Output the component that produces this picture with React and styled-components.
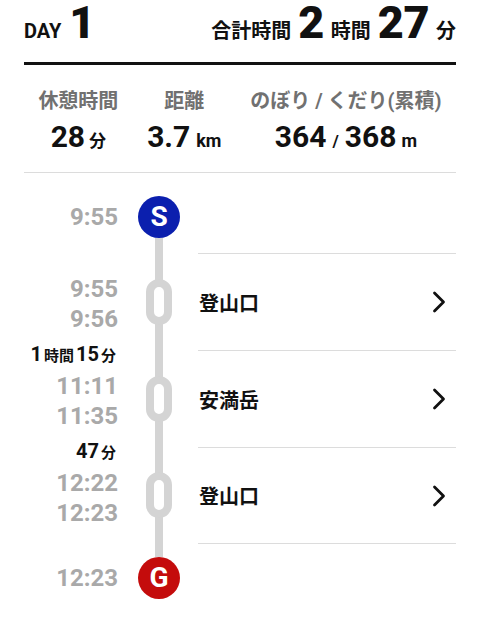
import React from 'react';
import styled, { createGlobalStyle } from 'styled-components';

const GlobalStyle = createGlobalStyle`
  html, body { margin: 0; padding: 0; background: #fff; }
  body {
    font-family: Roboto, "Noto Sans CJK JP", sans-serif;
    color: #111;
    -webkit-font-smoothing: antialiased;
  }
`;

const Page = styled.div`
  width: 480px;
  height: 623px;
  overflow: hidden;
  padding: 0 24px;
  box-sizing: border-box;
`;

const Header = styled.header`
  display: flex;
  justify-content: space-between;
  align-items: baseline;
  padding: 0 0 16px;
  border-bottom: 3px solid #111;
  line-height: 46px;
`;

const Group = styled.div`
  display: flex;
  align-items: baseline;
  gap: ${p => p.$gap || 7}px;
`;

const HeadSmall = styled.span`
  font-size: 20px;
  line-height: 1;
  font-weight: 700;
`;

const HeadBig = styled.span`
  font-size: 45px;
  font-weight: 900;
  letter-spacing: -0.5px;
`;

const Stats = styled.section`
  display: flex;
  justify-content: space-around;
  padding: 22px 0 17px;
  border-bottom: 1px solid #dcdcdc;
`;

const Stat = styled.div`
  display: flex;
  flex-direction: column;
  align-items: center;
  gap: 4px;
`;

const StatLabel = styled.div`
  font-size: 20px;
  line-height: 28px;
  font-weight: 700;
  color: #717171;
  white-space: nowrap;
`;

const StatValue = styled.div`
  font-size: 30px;
  line-height: 36px;
  height: 36px;
  font-weight: 700;
  white-space: nowrap;
`;

const Unit = styled.span`
  font-size: ${p => p.$size || 17}px;
  line-height: 1;
  margin: 0 ${p => p.$mr || 0}px 0 ${p => p.$ml || 4}px;
`;

const Timeline = styled.div`
  display: flex;
  flex-direction: column;
`;

const Row = styled.div`
  display: flex;
  height: ${p => p.$h}px;
`;

const TimeCell = styled.div`
  position: relative;
  width: 94px;
  margin-right: 20px;
  box-sizing: border-box;
  padding-top: ${p => p.$pt || 0}px;
  display: flex;
  flex-direction: column;
  align-items: flex-end;
  justify-content: ${p => (p.$center ? 'center' : 'flex-start')};
`;

const Time = styled.div`
  font-size: 24px;
  font-weight: 700;
  color: #a9a9a9;
  line-height: ${p => p.$lh || 30}px;
`;

const Duration = styled.div`
  position: absolute;
  right: 0;
  top: -11px;
  line-height: 30px;
  font-size: 20px;
  font-weight: 700;
  color: #111;
  white-space: nowrap;
`;

const DurUnit = styled.span`
  font-size: 15px;
  margin: 0 2px;
`;

const Rail = styled.div`
  width: 42px;
  display: flex;
  flex-direction: column;
  align-items: center;
  justify-content: center;
  box-sizing: border-box;
  background: linear-gradient(#d4d4d4, #d4d4d4) center / 8px 100% no-repeat;
`;

const EndRail = styled.div`
  width: 42px;
  display: flex;
  flex-direction: column;
  align-items: center;
  padding-top: ${p => p.$pt || 0}px;
  box-sizing: border-box;
`;

const Stem = styled.div`
  width: 8px;
  background: #d4d4d4;
  flex: ${p => (p.$h ? `0 0 ${p.$h}px` : '1')};
`;

const Terminal = styled.div`
  width: 42px;
  height: 42px;
  flex: 0 0 42px;
  border-radius: 50%;
  background: ${p => p.$color};
  color: #fff;
  font-size: 28px;
  font-weight: 700;
  display: flex;
  align-items: center;
  justify-content: center;
  line-height: 1;
`;

const Node = styled.div`
  width: 26px;
  height: 46px;
  box-sizing: border-box;
  border: 8px solid #d4d4d4;
  border-radius: 13px;
  background: #fff;
`;

const Content = styled.div`
  flex: 1;
  margin-left: 18px;
  border-top: 1px solid #dcdcdc;
  display: flex;
  align-items: center;
  justify-content: space-between;
  padding-right: 10px;
`;

const Place = styled.div`
  font-size: 20px;
  font-weight: 700;
  color: #111;
  padding-left: 1px;
`;

const Chevron = () => (
  <svg width="14" height="22" viewBox="0 0 14 22" fill="none">
    <polyline points="2.5,2 11.5,11 2.5,20" stroke="#111" strokeWidth="2.8" strokeLinecap="round" strokeLinejoin="round" />
  </svg>
);

const stops = [
  { name: '登山口', arr: '9:55', dep: '9:56', h: 97 },
  { name: '安満岳', arr: '11:11', dep: '11:35', h: 97, dur: [['1', '時間'], ['15', '分']] },
  { name: '登山口', arr: '12:22', dep: '12:23', h: 96, dur: [['47', '分']] },
];

export default function App() {
  return (
    <>
      <GlobalStyle />
      <Page>
        <Header>
          <Group $gap={8}>
            <HeadSmall>DAY</HeadSmall>
            <HeadBig>1</HeadBig>
          </Group>
          <Group $gap={7}>
            <HeadSmall>合計時間</HeadSmall>
            <HeadBig>2</HeadBig>
            <HeadSmall>時間</HeadSmall>
            <HeadBig>27</HeadBig>
            <HeadSmall>分</HeadSmall>
          </Group>
        </Header>

        <Stats>
          <Stat>
            <StatLabel>休憩時間</StatLabel>
            <StatValue>28<Unit $size={17}>分</Unit></StatValue>
          </Stat>
          <Stat>
            <StatLabel>距離</StatLabel>
            <StatValue>3.7<Unit $size={18} $ml={6}>km</Unit></StatValue>
          </Stat>
          <Stat>
            <StatLabel>のぼり / くだり(累積)</StatLabel>
            <StatValue>
              364<Unit $size={17} $ml={6} $mr={6}>/</Unit>368<Unit $size={18} $ml={5}>m</Unit>
            </StatValue>
          </Stat>
        </Stats>

        <Timeline>
          <Row $h={80}>
            <TimeCell $pt={23}>
              <Time $lh={42}>9:55</Time>
            </TimeCell>
            <EndRail $pt={23}>
              <Terminal $color="#0b1fae">S</Terminal>
              <Stem />
            </EndRail>
          </Row>

          {stops.map((s, i) => (
            <Row key={i} $h={s.h}>
              <TimeCell $center $pt={5}>
                {s.dur && (
                  <Duration>
                    {s.dur.map(([n, u]) => (
                      <React.Fragment key={u}>
                        {n}<DurUnit>{u}</DurUnit>
                      </React.Fragment>
                    ))}
                  </Duration>
                )}
                <Time>{s.arr}</Time>
                <Time>{s.dep}</Time>
              </TimeCell>
              <Rail>
                <Node />
              </Rail>
              <Content>
                <Place>{s.name}</Place>
                <Chevron />
              </Content>
            </Row>
          ))}

          <Row $h={80}>
            <TimeCell $pt={14}>
              <Time $lh={42}>12:23</Time>
            </TimeCell>
            <EndRail>
              <Stem $h={14} />
              <Terminal $color="#c40c0c">G</Terminal>
            </EndRail>
            <Content />
          </Row>
        </Timeline>
      </Page>
    </>
  );
}
